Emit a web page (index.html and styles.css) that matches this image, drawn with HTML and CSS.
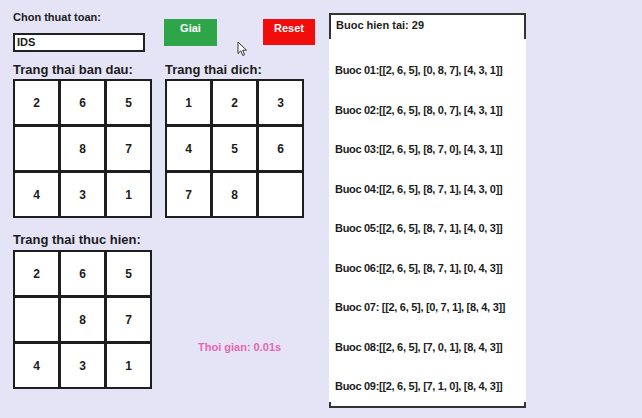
FILE: index.html
```html
<!DOCTYPE html>
<html lang="en">
<head>
    <meta charset="UTF-8">
    <title>8 Puzzle</title>
    <link rel="stylesheet" href="styles.css">
</head>
<body>
    <div class="app">
        <div class="left">
            <div class="top-row">
                <div class="algo">
                    <div class="label">Chon thuat toan:</div>
                    <div class="input">IDS</div>
                </div>
                <button class="btn btn-solve">Giai</button>
                <button class="btn btn-reset">Reset</button>
            </div>

            <div class="boards">
                <div class="board">
                    <div class="title">Trang thai ban dau:</div>
                    <div class="grid">
                        <div class="cell">2</div><div class="cell">6</div><div class="cell">5</div>
                        <div class="cell"></div><div class="cell">8</div><div class="cell">7</div>
                        <div class="cell">4</div><div class="cell">3</div><div class="cell">1</div>
                    </div>
                </div>
                <div class="board">
                    <div class="title">Trang thai dich:</div>
                    <div class="grid">
                        <div class="cell">1</div><div class="cell">2</div><div class="cell">3</div>
                        <div class="cell">4</div><div class="cell">5</div><div class="cell">6</div>
                        <div class="cell">7</div><div class="cell">8</div><div class="cell"></div>
                    </div>
                </div>
            </div>

            <div class="title title-run">Trang thai thuc hien:</div>
            <div class="run-row">
                <div class="grid">
                    <div class="cell">2</div><div class="cell">6</div><div class="cell">5</div>
                    <div class="cell"></div><div class="cell">8</div><div class="cell">7</div>
                    <div class="cell">4</div><div class="cell">3</div><div class="cell">1</div>
                </div>
                <div class="time">Thoi gian: 0.01s</div>
            </div>
        </div>

        <div class="panel">
            <div class="panel-head">Buoc hien tai: 29</div>
            <div class="steps">
                <div class="step">Buoc 01:[[2, 6, 5], [0, 8, 7], [4, 3, 1]]</div>
                <div class="step">Buoc 02:[[2, 6, 5], [8, 0, 7], [4, 3, 1]]</div>
                <div class="step">Buoc 03:[[2, 6, 5], [8, 7, 0], [4, 3, 1]]</div>
                <div class="step">Buoc 04:[[2, 6, 5], [8, 7, 1], [4, 3, 0]]</div>
                <div class="step">Buoc 05:[[2, 6, 5], [8, 7, 1], [4, 0, 3]]</div>
                <div class="step">Buoc 06:[[2, 6, 5], [8, 7, 1], [0, 4, 3]]</div>
                <div class="step">Buoc 07: [[2, 6, 5], [0, 7, 1], [8, 4, 3]]</div>
                <div class="step">Buoc 08:[[2, 6, 5], [7, 0, 1], [8, 4, 3]]</div>
                <div class="step">Buoc 09:[[2, 6, 5], [7, 1, 0], [8, 4, 3]]</div>
            </div>
            <div class="panel-foot"></div>
        </div>
    </div>

    <!-- mouse pointer -->
    <svg class="cursor" width="11" height="16" viewBox="0 0 11 16">
        <path d="M1 1 L1 12.5 L3.8 9.8 L5.8 14.5 L7.6 13.7 L5.7 9.2 L9.5 9.2 Z" fill="#fff" stroke="#333" stroke-width="1"/>
    </svg>
</body>
</html>
```

FILE: styles.css
```css
* { margin: 0; padding: 0; box-sizing: border-box; }

body {
    background: #e5e4f7;
    font-family: "Liberation Sans", Arial, sans-serif;
    font-weight: bold;
    color: #1c1c1c;
    width: 642px;
    height: 418px;
    overflow: hidden;
}

.app {
    display: flex;
    padding: 10px 0 0 13px;
}

.left { width: 316px; }

/* top controls */
.top-row { display: flex; align-items: flex-start; height: 42px; }
.algo { width: 151px; }
.label { font-size: 11px; line-height: 14px; }
.input {
    margin-top: 9px;
    width: 132px;
    height: 19px;
    border: 2px solid #222;
    background: #fff;
    font-size: 11px;
    line-height: 15px;
    padding-left: 2px;
}

.btn {
    margin-top: 9px;
    height: 27px;
    border: none;
    color: #fff;
    font-family: inherit;
    font-weight: bold;
    font-size: 11px;
    line-height: 14px;
    padding-top: 2px;
    display: flex;
    justify-content: center;
    align-items: flex-start;
}
.btn-solve { width: 53px; background: #2fa54a; }
.btn-reset { width: 52px; height: 26px; margin-left: 46px; background: #f20d0d; }

/* boards */
.boards { display: flex; gap: 13px; margin-top: 11px; }
.title { font-size: 13px; line-height: 14px; margin-bottom: 2px; }
.title-run { margin-top: 15px; margin-bottom: 3px; }

.grid {
    display: grid;
    grid-template-columns: repeat(3, 43px);
    grid-auto-rows: 43px;
    gap: 3px;
    padding: 2px;
    width: 139px;
    background: #1e1e1e;
}
.cell {
    background: #fff;
    display: flex;
    align-items: center;
    justify-content: center;
    font-size: 12px;
}

.run-row { display: flex; }
.time {
    margin: 90px 0 0 46px;
    font-size: 11px;
    line-height: 14px;
    color: #e466b4;
}

/* steps panel */
.panel {
    margin-top: 3px;
    width: 197px;
    background: #fff;
    align-self: flex-start;
}
.panel-head {
    height: 26px;
    border: 2px solid #333;
    border-bottom: none;
    font-size: 11px;
    padding: 4px 0 0 5px;
}
.steps {
    display: flex;
    flex-direction: column;
    gap: 25.5px;
    padding: 24px 0 9px 6px;
}
.step {
    font-size: 11px;
    line-height: 14px;
    letter-spacing: -0.3px;
}
.panel-foot {
    height: 6px;
    border: 2px solid #333;
    border-top: none;
}

.cursor {
    position: absolute;
    left: 237px;
    top: 41px;
}
```
